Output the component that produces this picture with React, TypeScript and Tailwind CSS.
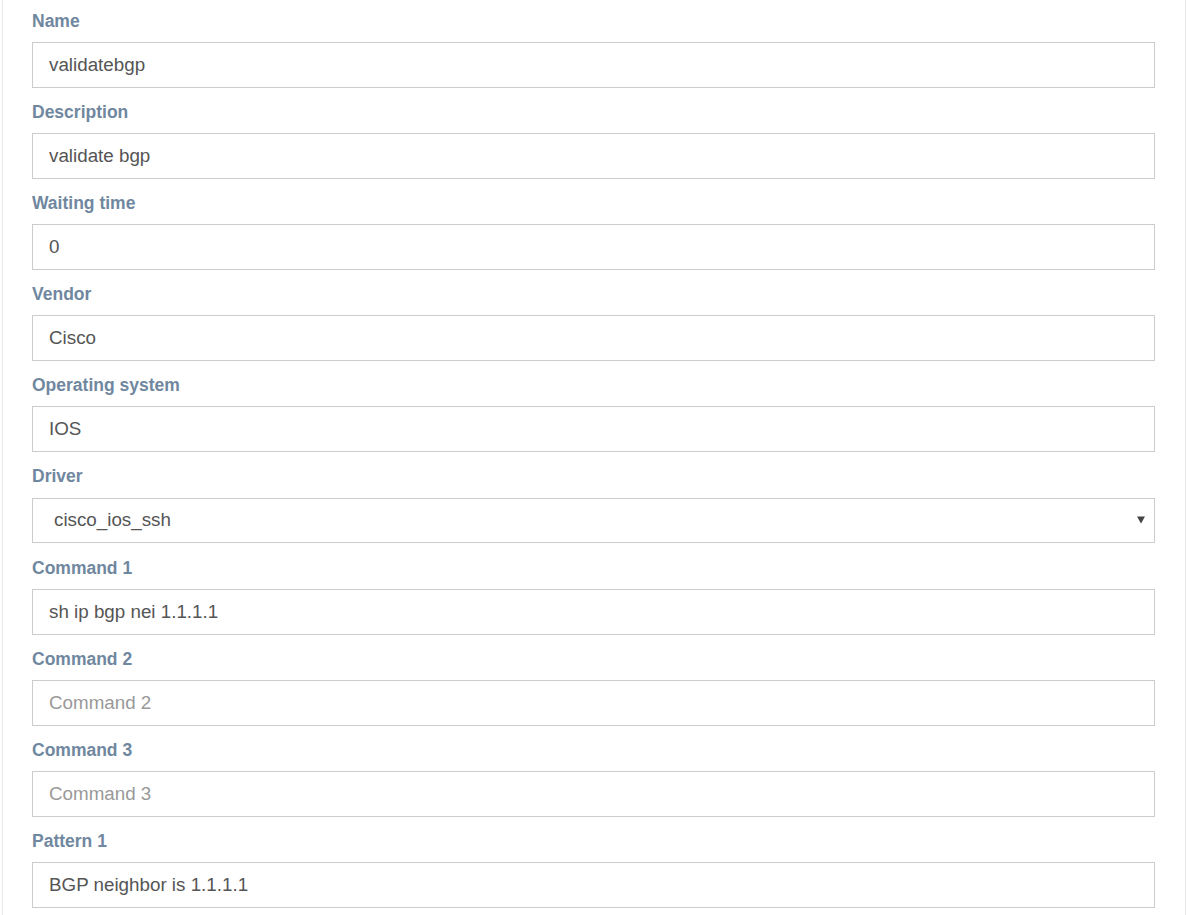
import { useState } from 'react';

type Field = {
  label: string;
  value?: string;
  placeholder: string;
  select?: string[];
};

// 表單欄位
const fields: Field[] = [
  { label: 'Name', value: 'validatebgp', placeholder: 'Name' },
  { label: 'Description', value: 'validate bgp', placeholder: 'Description' },
  { label: 'Waiting time', value: '0', placeholder: 'Waiting time' },
  { label: 'Vendor', value: 'Cisco', placeholder: 'Vendor' },
  { label: 'Operating system', value: 'IOS', placeholder: 'Operating system' },
  {
    label: 'Driver',
    value: 'cisco_ios_ssh',
    placeholder: 'Driver',
    select: ['cisco_ios_ssh', 'cisco_ios_telnet', 'juniper_junos', 'arista_eos'],
  },
  { label: 'Command 1', value: 'sh ip bgp nei 1.1.1.1', placeholder: 'Command 1' },
  { label: 'Command 2', value: '', placeholder: 'Command 2' },
  { label: 'Command 3', value: '', placeholder: 'Command 3' },
  { label: 'Pattern 1', value: 'BGP neighbor is 1.1.1.1', placeholder: 'Pattern 1' },
];

function FormField({ field }: { field: Field }) {
  const [value, setValue] = useState(field.value ?? '');

  if (field.select) {
    return (
      <div className="mb-[16px]">
        <label className="mb-[13px] block text-[17.5px] font-bold leading-[18px] text-[#7087a0]">
          {field.label}
        </label>
        <div className="relative">
          <select
            value={value}
            onChange={(e) => setValue(e.target.value)}
            className="block h-[45px] w-full appearance-none border border-[#cccccc] bg-white pl-[21px] pr-10 text-[18.8px] text-[#555555] outline-none"
          >
            {field.select.map((opt) => (
              <option key={opt} value={opt}>
                {opt}
              </option>
            ))}
          </select>
          <svg
            className="pointer-events-none absolute right-[10px] top-[18px]"
            width="8"
            height="8"
            viewBox="0 0 8 8"
          >
            <path d="M0 0.5 L8 0.5 L4 7.5 Z" fill="#444444" />
          </svg>
        </div>
      </div>
    );
  }

  return (
    <div className="mb-[15px]">
      <label className="mb-[12px] block text-[17.5px] font-bold leading-[18px] text-[#7087a0]">
        {field.label}
      </label>
      <input
        type="text"
        value={value}
        placeholder={field.placeholder}
        onChange={(e) => setValue(e.target.value)}
        className="block h-[46px] w-full border border-[#cccccc] bg-white px-[16px] text-[18.8px] text-[#555555] outline-none placeholder:text-[#999999]"
      />
    </div>
  );
}

export default function App() {
  return (
    <div
      className="h-[915px] overflow-hidden bg-white pl-[2px]"
      style={{ fontFamily: '"Liberation Sans", Arial, sans-serif' }}
    >
      <div className="h-full border-x border-[#e8e8e8] pl-[29px] pr-[29px] pt-[12px]">
        <div className="pr-[1px]">
          {fields.map((f) => (
            <FormField key={f.label} field={f} />
          ))}
        </div>
      </div>
    </div>
  );
}
